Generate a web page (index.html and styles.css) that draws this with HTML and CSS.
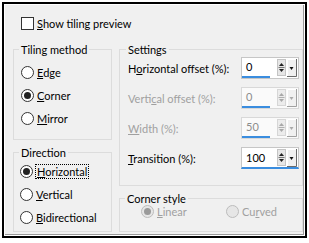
FILE: index.html
```html
<!DOCTYPE html>
<html>
<head>
<meta charset="utf-8">
<link rel="stylesheet" href="styles.css">
</head>
<body>
<div class="frame">
  <div class="panel">
    <label class="check-row">
      <span class="checkbox"></span>
      <span class="txt"><u>S</u>how tiling preview</span>
    </label>
    <div class="cols">
      <div class="col col-left">
        <div class="group g-tiling">
          <div class="legend">Tiling method</div>
          <div class="gbody">
            <div class="radio-row"><span class="radio"></span><span class="txt"><u>E</u>dge</span></div>
            <div class="radio-row"><span class="radio checked"></span><span class="txt"><u>C</u>orner</span></div>
            <div class="radio-row"><span class="radio"></span><span class="txt"><u>M</u>irror</span></div>
          </div>
        </div>
        <div class="group g-direction">
          <div class="legend">Direction</div>
          <div class="gbody">
            <div class="radio-row"><span class="radio checked"></span><span class="txt focus"><u>H</u>orizontal</span></div>
            <div class="radio-row"><span class="radio"></span><span class="txt"><u>V</u>ertical</span></div>
            <div class="radio-row"><span class="radio"></span><span class="txt"><u>B</u>idirectional</span></div>
          </div>
        </div>
      </div>
      <div class="col col-right">
        <div class="group g-settings">
          <div class="legend">Settings</div>
          <div class="gbody">
            <div class="set-row">
              <span class="lbl">H<u>o</u>rizontal offset (%):</span>
              <div class="spin">
                <span class="field">0</span>
                <span class="btns">
                  <svg class="updown" width="9" height="17" viewBox="0 0 9 17"><rect x="0.5" y="0.5" width="8" height="16" fill="#e6e6e6" stroke="#c4c4c4"/><path d="M2 7 L4.5 4 L7 7 Z" fill="#222"/><line x1="1.5" y1="8.5" x2="7.5" y2="8.5" stroke="#777"/><path d="M2 10 L4.5 13 L7 10 Z" fill="#222"/></svg>
                  <svg class="drop" width="10" height="18" viewBox="0 0 10 18"><rect x="0" y="0" width="10" height="18" fill="#f0f0f0"/><path d="M0.5 17.5 V0.5 H9.5" fill="none" stroke="#fff"/><path d="M0 17.5 H9.5 V0" fill="none" stroke="#6a6a6a"/><path d="M2.5 8 L6.5 8 L4.5 11 Z" fill="#111"/></svg>
                </span>
              </div>
            </div>
            <div class="set-row disabled">
              <span class="lbl">Verti<u>c</u>al offset (%):</span>
              <div class="spin">
                <span class="field">0</span>
                <span class="btns">
                  <svg class="updown" width="9" height="17" viewBox="0 0 9 17"><rect x="0.5" y="0.5" width="8" height="16" fill="#ececec" stroke="#d6d6d6"/><path d="M2 7 L4.5 4 L7 7 Z" fill="#a8a8a8"/><line x1="1.5" y1="8.5" x2="7.5" y2="8.5" stroke="#b0b0b0"/><path d="M2 10 L4.5 13 L7 10 Z" fill="#a8a8a8"/></svg>
                  <svg class="drop" width="10" height="18" viewBox="0 0 10 18"><rect x="0" y="0" width="10" height="18" fill="#f0f0f0"/><path d="M0.5 17.5 V0.5 H9.5" fill="none" stroke="#fff"/><path d="M0 17.5 H9.5 V0" fill="none" stroke="#a0a0a0"/><path d="M2.5 8 L6.5 8 L4.5 11 Z" fill="#a8a8a8"/></svg>
                </span>
              </div>
            </div>
            <div class="set-row disabled">
              <span class="lbl"><u>W</u>idth (%):</span>
              <div class="spin">
                <span class="field">50</span>
                <span class="btns">
                  <svg class="updown" width="9" height="17" viewBox="0 0 9 17"><rect x="0.5" y="0.5" width="8" height="16" fill="#ececec" stroke="#d6d6d6"/><path d="M2 7 L4.5 4 L7 7 Z" fill="#a8a8a8"/><line x1="1.5" y1="8.5" x2="7.5" y2="8.5" stroke="#b0b0b0"/><path d="M2 10 L4.5 13 L7 10 Z" fill="#a8a8a8"/></svg>
                  <svg class="drop" width="10" height="18" viewBox="0 0 10 18"><rect x="0" y="0" width="10" height="18" fill="#f0f0f0"/><path d="M0.5 17.5 V0.5 H9.5" fill="none" stroke="#fff"/><path d="M0 17.5 H9.5 V0" fill="none" stroke="#a0a0a0"/><path d="M2.5 8 L6.5 8 L4.5 11 Z" fill="#a8a8a8"/></svg>
                </span>
              </div>
            </div>
            <div class="set-row">
              <span class="lbl"><u>T</u>ransition (%):</span>
              <div class="spin focused">
                <span class="field">100</span>
                <span class="btns">
                  <svg class="updown" width="9" height="17" viewBox="0 0 9 17"><rect x="0.5" y="0.5" width="8" height="16" fill="#e6e6e6" stroke="#c4c4c4"/><path d="M2 7 L4.5 4 L7 7 Z" fill="#222"/><line x1="1.5" y1="8.5" x2="7.5" y2="8.5" stroke="#777"/><path d="M2 10 L4.5 13 L7 10 Z" fill="#222"/></svg>
                  <svg class="drop" width="10" height="18" viewBox="0 0 10 18"><rect x="0" y="0" width="10" height="18" fill="#f0f0f0"/><path d="M0.5 17.5 V0.5 H9.5" fill="none" stroke="#fff"/><path d="M0 17.5 H9.5 V0" fill="none" stroke="#6a6a6a"/><path d="M2.5 8 L6.5 8 L4.5 11 Z" fill="#111"/></svg>
                </span>
              </div>
            </div>
          </div>
        </div>
        <div class="group g-corner">
          <div class="legend">Corner style</div>
          <div class="gbody corner-row">
            <div class="radio-row disabled"><span class="radio checked"></span><span class="txt"><u>L</u>inear</span></div>
            <div class="radio-row disabled"><span class="radio"></span><span class="txt">Cu<u>r</u>ved</span></div>
          </div>
        </div>
      </div>
    </div>
  </div>
</div>
</body>
</html>
```
FILE: styles.css
```css
* { box-sizing: border-box; }
html, body { margin: 0; padding: 0; background: #fff; }
body {
  font-family: "Lato", "Open Sans", sans-serif;
  font-size: 11px;
  color: #000;
  width: 309px;
  height: 243px;
  overflow: hidden;
}
.frame {
  margin: 2px 0 0 2px;
  width: 305px;
  height: 236px;
  border: 2px solid #000;
  padding: 1px 0 0 1px;
  background: #fff;
}
.panel {
  width: 299px;
  height: 230px;
  background: #f0f0f0;
  border-right: 1px solid #9a9a9a;
  border-bottom: 1px solid #9a9a9a;
  padding: 12px 0 0 8px;
}
u { text-decoration: underline; text-underline-offset: 1px; }
.check-row {
  display: flex;
  align-items: center;
  height: 13px;
  padding-left: 8px;
}
.checkbox {
  width: 13px;
  height: 13px;
  border: 1px solid #333;
  background: #fff;
  flex: none;
}
.txt { margin-left: 3px; line-height: 13px; white-space: nowrap; }
.cols {
  display: flex;
  gap: 7px;
  margin-top: 19px;
}
.col { display: flex; flex-direction: column; gap: 12px; }
.col-left { width: 99px; }
.col-right { width: 184px; }
.group {
  border: 1px solid #dcdcdc;
}
.legend {
  width: fit-content;
  height: 13px;
  line-height: 13px;
  margin: -7px 0 -6px 5px;
  padding: 0 2px;
  background: #f0f0f0;
  white-space: nowrap;
}
.g-tiling { height: 91px; }
.g-tiling .gbody { padding: 11px 0 0 7px; }
.g-direction { height: 80px; }
.g-direction .gbody { padding: 7px 0 0 6px; }
.g-settings { height: 137px; }
.g-settings .gbody { padding: 7px 3px 0 8px; display: flex; flex-direction: column; gap: 8px; }
.g-corner { height: 34px; }
.g-corner .gbody { padding: 2px 0 0 21px; }
.g-corner .radio-row { height: 20px; }
.g-settings .legend { margin-left: 6px; }
.radio-row {
  display: flex;
  align-items: center;
  height: 23px;
}
.radio {
  width: 13px;
  height: 13px;
  border: 1px solid #333;
  border-radius: 50%;
  background: #fff;
  flex: none;
  display: flex;
  align-items: center;
  justify-content: center;
}
.radio.checked::after {
  content: "";
  width: 7px;
  height: 7px;
  border-radius: 50%;
  background: #222;
}
.focus {
  outline: 1px dotted #000;
  outline-offset: 0;
  padding: 0 1px;
}
.set-row {
  display: flex;
  align-items: center;
  justify-content: space-between;
  height: 22px;
}
.set-row .lbl { white-space: nowrap; }
.disabled .lbl, .disabled .txt { color: #a0a0a0; }
.spin {
  width: 58px;
  height: 22px;
  border: 1px solid #c6c6c6;
  background: #fff;
  display: flex;
  align-items: stretch;
}
.spin .field {
  width: 28px;
  padding-left: 4px;
  line-height: 18px;
  border-bottom: 2px solid #3a8ddf;
}
.spin.focused { border-bottom: 2px solid #3a8ddf; }
.spin.focused .field { border-bottom: none; line-height: 19px; }
.disabled .spin { border-color: #d8d8d8; background: #fafafa; }
.disabled .spin .field { color: #8c8c8c; }
.btns {
  display: flex;
  align-items: flex-start;
  margin-left: auto;
  padding-top: 1px;
  padding-right: 1px;
  gap: 1px;
}
.btns svg { display: block; }
.corner-row {
  display: grid;
  grid-template-columns: 85px auto;
}
.disabled .radio { border-color: #bcbcbc; background: #e6e6e6; }
.disabled .radio.checked::after { background: #9a9a9a; }
```
